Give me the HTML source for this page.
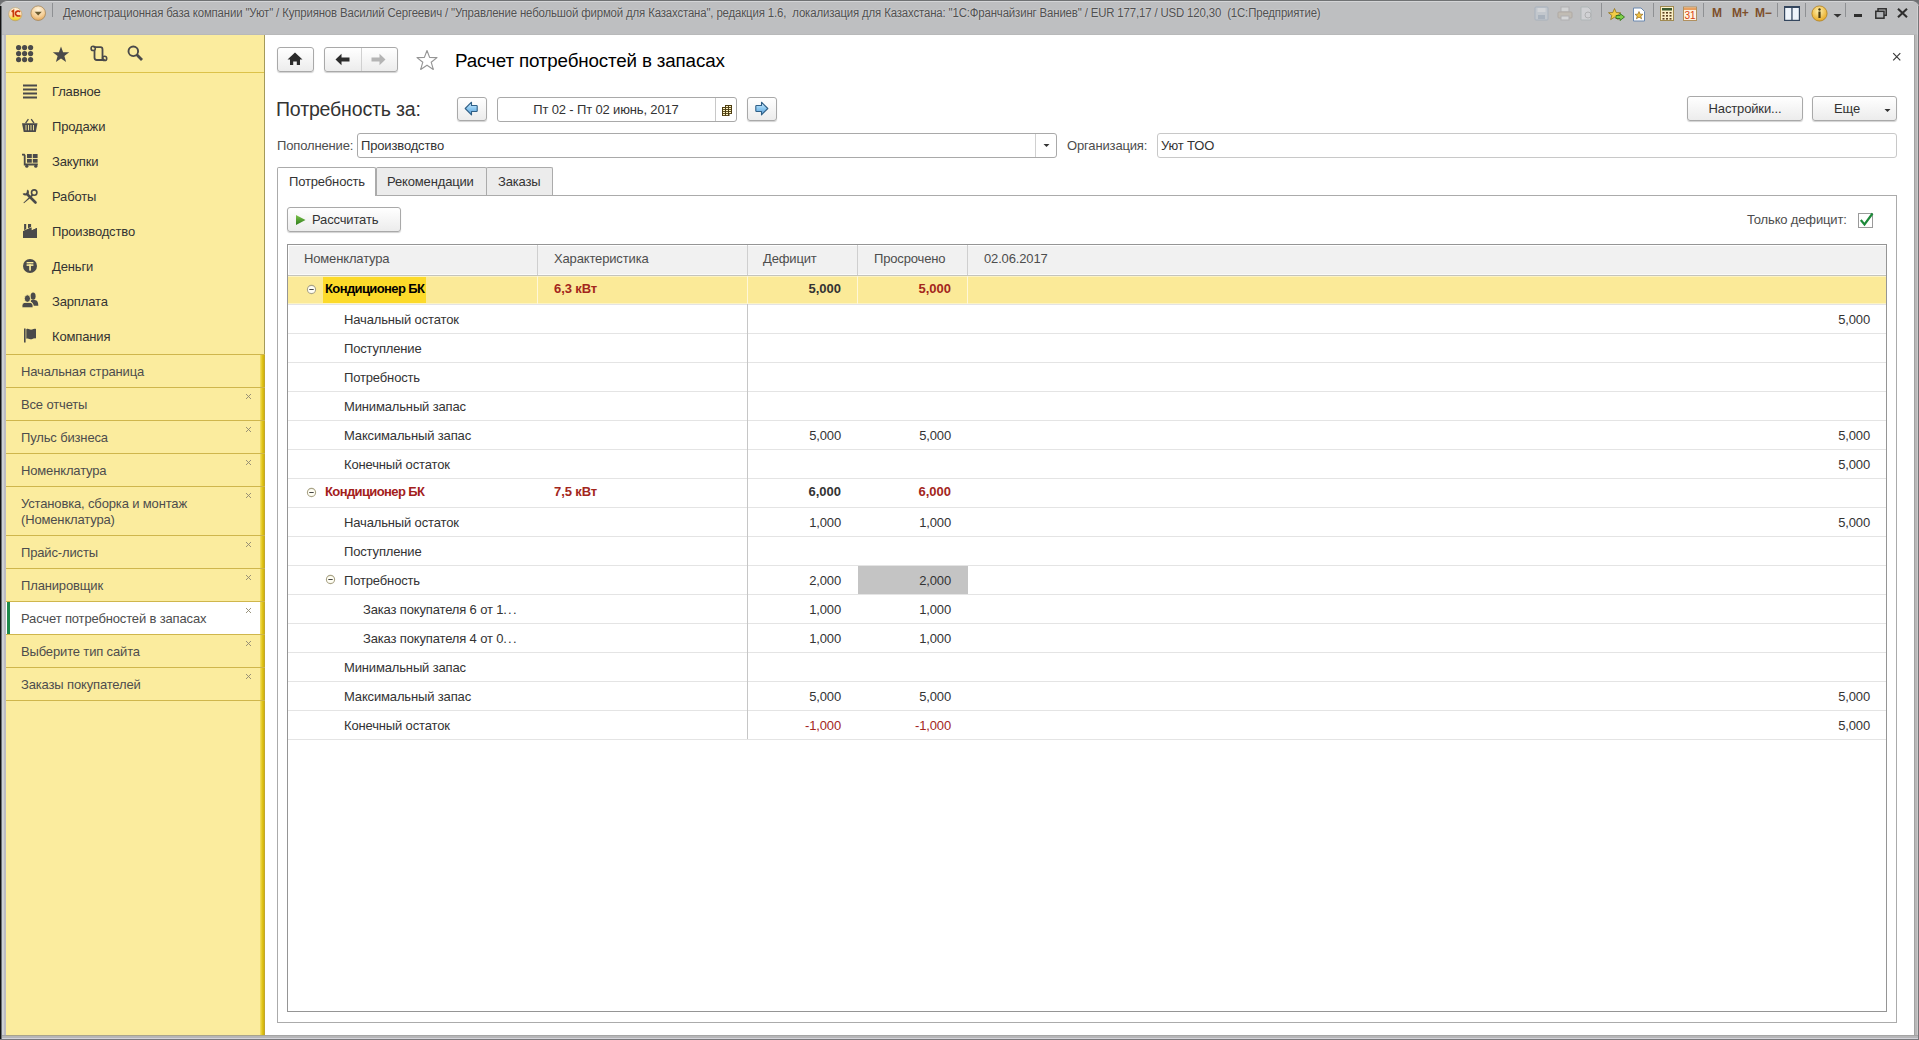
<!DOCTYPE html>
<html><head><meta charset="utf-8">
<style>
*{box-sizing:border-box;margin:0;padding:0}
html,body{width:1919px;height:1040px;overflow:hidden;background:#6e7073;font-family:"Liberation Sans",sans-serif;color:#333}
div,svg{position:absolute}
.t{white-space:nowrap;font-size:13px;line-height:16px;height:16px;letter-spacing:-0.15px}
#frame{left:0;top:0;width:1919px;height:1040px;background:#bebfc1;border-radius:7px 7px 0 0;border-top:1px solid #707274}
#title{left:2px;top:1px;width:1915px;height:34px;background:linear-gradient(#d4d5d7 0,#d4d5d7 1px,#bebfc1 1px,#bebfc1 33px,#b8b9ba 33px);border-radius:6px 6px 0 0}
#side{left:6px;top:35px;width:259px;height:1000px;background:#fbec9e}
#main{left:265px;top:35px;width:1649px;height:1000px;background:#fff}
.ico{fill:#4a4a4a}
.sep{left:0;width:259px;height:1px;background:#cfb64c}
.ow{left:15px;color:#4d4d4d}
.x{left:238px;width:9px;height:9px}
.btn{border:1px solid #a9a9a9;border-radius:3px;background:linear-gradient(#ffffff,#ececec);box-shadow:0 1px 1px rgba(0,0,0,.18)}
.row{left:0;width:1598px;height:1px;background:#e3e3e3}
.nm{color:#333}
.num{text-align:right;width:120px}
.red{color:#a3261c}
.b{font-weight:bold;letter-spacing:-0.6px}
</style></head><body>
<div id="frame"></div>
<div style="left:0;top:6px;width:1px;height:1034px;background:#111"></div>
<div style="left:1px;top:6px;width:1px;height:1034px;background:#6c7074"></div>
<div style="left:2px;top:35px;width:2px;height:1004px;background:#cdd0d4"></div>
<div style="left:4px;top:35px;width:2px;height:1004px;background:#bdbcc2"></div>
<div style="left:1914px;top:35px;width:1px;height:1004px;background:#a2a2a2"></div>
<div style="left:1915px;top:35px;width:2px;height:1004px;background:#b8b8b8"></div>
<div style="left:1917px;top:35px;width:1px;height:1004px;background:#cacaca"></div>
<div style="left:1918px;top:6px;width:1px;height:1034px;background:#757578"></div>
<div style="left:1917px;top:6px;width:1px;height:29px;background:#d0d0d2"></div>
<div style="left:2px;top:1035px;width:1916px;height:1px;background:#a4a4a4"></div>
<div style="left:6px;top:1035px;width:259px;height:1px;background:#a8a48c"></div>
<div style="left:2px;top:1036px;width:1916px;height:2px;background:#b6b6b8"></div>
<div style="left:2px;top:1038px;width:1916px;height:1px;background:#d4d4da"></div>
<div style="left:0;top:1039px;width:1919px;height:1px;background:#78787c"></div>
<div id="title">
  <div class="t" style="left:61px;top:5px;font-size:12px;line-height:14px;color:#505050;text-shadow:0 0 2px rgba(255,255,255,.5);transform:scaleX(0.95);transform-origin:0 0">Демонстрационная база компании "Уют" / Куприянов Василий Сергеевич / "Управление небольшой фирмой для Казахстана", редакция 1.6,&nbsp; локализация для Казахстана: "1С:Франчайзинг Ваниев" / EUR 177,17 / USD 120,30&nbsp; (1С:Предприятие)</div>
  <!-- left logo buttons -->
  <svg style="left:5px;top:5px" width="16" height="16" viewBox="0 0 16 16"><defs><linearGradient id="lg1" x1="0" y1="0" x2="0" y2="1"><stop offset="0" stop-color="#fff6e0"/><stop offset="0.55" stop-color="#ffd9a8"/><stop offset="0.8" stop-color="#f8e040"/><stop offset="1" stop-color="#e0c030"/></linearGradient></defs><circle cx="8.3" cy="8.2" r="6.6" fill="url(#lg1)" stroke="#b89a60" stroke-width="0.6"/><path d="M4.6 5.8 L6.4 4.6 V11.2" fill="none" stroke="#c8400a" stroke-width="1.7"/><path d="M13 6 C12 4.6 9 4.6 8.5 7.2 C8.2 9.2 10 10.4 13.4 9.9" fill="none" stroke="#c8300a" stroke-width="1.6"/></svg>
  <svg style="left:27px;top:3px" width="18" height="18" viewBox="0 0 18 18"><defs><radialGradient id="lg2" cx="0.5" cy="0.25" r="0.8"><stop offset="0" stop-color="#fff4dc"/><stop offset="0.6" stop-color="#f5cf98"/><stop offset="1" stop-color="#e0a050"/></radialGradient></defs><circle cx="9.2" cy="9.2" r="7.3" fill="url(#lg2)" stroke="#a08050" stroke-width="0.7"/><path d="M5.6 7.8 H12.8 L9.2 11.6 Z" fill="#6a5a30"/></svg>
  <div style="left:50px;top:2px;width:1px;height:14px;background:#8e9093"></div>
  <!-- right toolbar -->
  <svg style="left:1532px;top:5px" width="15" height="15" viewBox="0 0 15 15" opacity="0.4"><rect x="1" y="1" width="13" height="13" rx="1" fill="#c8d4e0" stroke="#8aa0b8"/><rect x="3.5" y="2" width="8" height="4" fill="#f0f4f8"/><rect x="4" y="9" width="7" height="4" fill="#8aa0b8"/></svg>
  <svg style="left:1555px;top:5px" width="16" height="15" viewBox="0 0 16 15" opacity="0.38"><rect x="4" y="1" width="8" height="5" fill="#f4f4f4" stroke="#999"/><rect x="1" y="6" width="14" height="6" rx="1" fill="#c8b8a0" stroke="#998877"/><rect x="4" y="10" width="8" height="4" fill="#fff" stroke="#999"/></svg>
  <svg style="left:1577px;top:5px" width="15" height="15" viewBox="0 0 15 15" opacity="0.38"><path d="M2 1 H9 L12 4 V14 H2 Z" fill="#eef0f4" stroke="#9aa"/><circle cx="9" cy="9" r="3" fill="none" stroke="#999"/></svg>
  <div style="left:1599px;top:2px;width:1px;height:14px;background:#8e9093"></div>
  <svg style="left:1606px;top:7px" width="18" height="14" viewBox="0 0 18 14"><path d="M6.5 0.5 L8.2 4.5 L12.5 4.7 L9.2 7.4 L10.3 11.6 L6.5 9.2 L2.7 11.6 L3.8 7.4 L0.5 4.7 L4.8 4.5 Z" fill="#f2cc48" stroke="#8a6a10" stroke-width="0.7"/><path d="M8 7.5 H12 V5.5 L16.5 9 L12 12.5 V10.5 H8 Z" fill="#7ed04a" stroke="#2a6a10" stroke-width="0.8"/></svg>
  <svg style="left:1630px;top:6px" width="14" height="15" viewBox="0 0 14 15"><path d="M1.5 1 H9 L12.5 4.5 V14 H1.5 Z" fill="#fff" stroke="#6a88b0" stroke-width="1"/><path d="M7 4.5 L8.2 7.2 L11 7.3 L8.8 9 L9.6 11.8 L7 10.2 L4.4 11.8 L5.2 9 L3 7.3 L5.8 7.2 Z" fill="#f0c040" stroke="#8a6010" stroke-width="0.6"/></svg>
  <div style="left:1651px;top:2px;width:1px;height:14px;background:#8e9093"></div>
  <svg style="left:1658px;top:5px" width="14" height="15" viewBox="0 0 14 15"><rect x="0.5" y="0.5" width="13" height="14" fill="#fbf0c8" stroke="#a08a50"/><rect x="2" y="2" width="10" height="2.5" fill="#3a5a30"/><g fill="#5a4020"><rect x="2.5" y="6" width="2" height="1.6"/><rect x="6" y="6" width="2" height="1.6"/><rect x="9.5" y="6" width="2" height="1.6"/><rect x="2.5" y="9" width="2" height="1.6"/><rect x="6" y="9" width="2" height="1.6"/><rect x="9.5" y="9" width="2" height="1.6"/><rect x="2.5" y="12" width="2" height="1.6"/><rect x="6" y="12" width="2" height="1.6"/><rect x="9.5" y="12" width="2" height="1.6"/></g></svg>
  <svg style="left:1681px;top:4px" width="15" height="16" viewBox="0 0 15 16"><rect x="0.5" y="2" width="13" height="13.5" fill="#fff4e0" stroke="#b09060"/><rect x="1" y="2.5" width="12" height="2.5" fill="#e8a060"/><text x="7" y="14" font-family="Liberation Sans" font-size="10" fill="#d8400f" text-anchor="middle">31</text></svg>
  <div style="left:1701px;top:2px;width:1px;height:14px;background:#8e9093"></div>
  <div class="t b" style="left:1710px;top:6px;font-size:12px;line-height:12px;color:#7d4f2c;letter-spacing:0">M</div>
  <div class="t b" style="left:1730px;top:6px;font-size:12px;line-height:12px;color:#7d4f2c;letter-spacing:-0.3px">M+</div>
  <div class="t b" style="left:1753px;top:6px;font-size:12px;line-height:12px;color:#7d4f2c;letter-spacing:-0.3px">M&#8722;</div>
  <div style="left:1775px;top:2px;width:1px;height:14px;background:#8e9093"></div>
  <svg style="left:1782px;top:5px" width="16" height="15" viewBox="0 0 16 15"><rect x="0.6" y="0.6" width="14.8" height="13.8" fill="#eef4fb" stroke="#34465e" stroke-width="1.2"/><rect x="0" y="0" width="16" height="2" fill="#34465e"/><rect x="7.3" y="1" width="1.3" height="13" fill="#34465e"/></svg>
  <div style="left:1803px;top:2px;width:1px;height:14px;background:#8e9093"></div>
  <svg style="left:1809px;top:4px" width="17" height="17" viewBox="0 0 17 17"><defs><radialGradient id="ig" cx="0.45" cy="0.35" r="0.65"><stop offset="0" stop-color="#fff2b0"/><stop offset="1" stop-color="#e8a820"/></radialGradient></defs><circle cx="8.5" cy="8.5" r="7.6" fill="url(#ig)" stroke="#b08020" stroke-width="0.8"/><circle cx="8.5" cy="4.5" r="1.2" fill="#4a3a10"/><rect x="7.4" y="6.5" width="2.2" height="6.5" fill="#4a3a10"/></svg>
  <svg style="left:1831px;top:12px" width="9" height="5" viewBox="0 0 9 5"><path d="M0.5 1 H8.5 L4.5 4.5 Z" fill="#333"/></svg>
  <div style="left:1843px;top:2px;width:1px;height:14px;background:#8e9093"></div>
  <div style="left:1852px;top:13px;width:8px;height:3px;background:#2e2e2e"></div>
  <svg style="left:1873px;top:7px" width="12" height="11" viewBox="0 0 12 11"><rect x="3" y="0.8" width="8.2" height="6.5" fill="none" stroke="#2e2e2e" stroke-width="1.5"/><rect x="0.8" y="3.3" width="8.2" height="6.9" fill="#b2b4b7" stroke="#2e2e2e" stroke-width="1.5"/></svg>
  <svg style="left:1895px;top:7px" width="11" height="10" viewBox="0 0 11 10"><path d="M1 0.8 L10 9.2 M10 0.8 L1 9.2" stroke="#2e2e2e" stroke-width="2.1"/></svg>
</div>

<!-- SIDEBAR -->
<div id="side">
  <div class="sep" style="top:37px;background:#dcc24a"></div>
  <!-- top icons -->
  <svg style="left:10px;top:10px" width="18" height="18" viewBox="0 0 18 18" class="ico">
    <circle cx="2.6" cy="2.6" r="2.6"/><circle cx="8.6" cy="2.6" r="2.6"/><circle cx="14.6" cy="2.6" r="2.6"/>
    <circle cx="2.6" cy="8.6" r="2.6"/><circle cx="8.6" cy="8.6" r="2.6"/><circle cx="14.6" cy="8.6" r="2.6"/>
    <circle cx="2.6" cy="14.6" r="2.6"/><circle cx="8.6" cy="14.6" r="2.6"/><circle cx="14.6" cy="14.6" r="2.6"/>
  </svg>
  <svg style="left:46px;top:11px" width="18" height="17" viewBox="0 0 18 17" class="ico">
    <path d="M9 0.5 L11.1 6.2 L17.2 6.3 L12.4 10.1 L14.1 16 L9 12.5 L3.9 16 L5.6 10.1 L0.8 6.3 L6.9 6.2 Z"/>
  </svg>
  <svg style="left:84px;top:10px" width="18" height="17" viewBox="0 0 18 17">
    <path d="M3.5 2.2 H10.5 C12 2.2 12.5 3 12.5 4.5 V12.5 C12.5 14.2 13.4 15 14.8 15 H6.8 C5.4 15 4.5 14.2 4.5 12.5 V5.5" fill="none" stroke="#4a4a4a" stroke-width="1.8"/>
    <circle cx="3.2" cy="3.4" r="2.1" fill="none" stroke="#4a4a4a" stroke-width="1.6"/>
    <circle cx="14.6" cy="13.4" r="2.1" fill="none" stroke="#4a4a4a" stroke-width="1.6"/>
  </svg>
  <svg style="left:121px;top:10px" width="17" height="17" viewBox="0 0 17 17">
    <circle cx="6.3" cy="6.3" r="4.8" fill="none" stroke="#4a4a4a" stroke-width="1.9"/>
    <path d="M9.6 9.6 L15 15" stroke="#4a4a4a" stroke-width="2.8"/>
  </svg>

  <!-- menu -->
  <svg style="left:17px;top:49px" width="15" height="15" viewBox="0 0 15 15" class="ico">
    <rect x="0" y="0.5" width="14" height="2"/><rect x="0" y="4.5" width="14" height="2"/><rect x="0" y="8.5" width="14" height="2"/><rect x="0" y="12.5" width="14" height="2"/>
  </svg>
  <div class="t" style="left:46px;top:49px">Главное</div>

  <svg style="left:16px;top:83px" width="16" height="15" viewBox="0 0 16 15" class="ico">
    <path d="M3.6 5.2 L6.4 1.2 M12 5.2 L9.2 1.2" stroke="#4a4a4a" stroke-width="1.3"/>
    <path d="M0 5.2 H15.5 L13.8 14 H1.7 Z"/>
    <path d="M4 7 V12.3 M6.5 7 V12.3 M9 7 V12.3 M11.5 7 V12.3" stroke="#fbec9e" stroke-width="0.9"/>
  </svg>
  <div class="t" style="left:46px;top:84px">Продажи</div>

  <svg style="left:16px;top:118px" width="17" height="15" viewBox="0 0 17 15" class="ico">
    <path d="M0 0.8 H2.6 L3.6 2.3 V10.6 H15.8 V12.4 H1.8 V3 L1.4 2.4 H0 Z"/>
    <rect x="5" y="1" width="4.8" height="4"/><rect x="10.8" y="1" width="4.8" height="4"/>
    <rect x="5" y="5.9" width="4.8" height="3.8"/><rect x="10.8" y="5.9" width="4.8" height="3.8"/>
    <circle cx="4.8" cy="13.2" r="1.6"/><circle cx="13.8" cy="13.2" r="1.6"/>
  </svg>
  <div class="t" style="left:46px;top:119px">Закупки</div>

  <svg style="left:15px;top:153px" width="18" height="17" viewBox="0 0 18 17">
    <path d="M6 6 L14.5 14.5" stroke="#4a4a4a" stroke-width="2.6" stroke-linecap="round"/>
    <path d="M6.8 1.6 A3.4 3.4 0 1 1 1.6 5.8 L3.4 4.9 A1.4 1.4 0 1 0 5.6 3.1 Z" fill="#4a4a4a"/>
    <circle cx="13.2" cy="4.6" r="2.7" fill="none" stroke="#4a4a4a" stroke-width="1.6"/>
    <path d="M11 6.2 L12.4 7.6 L3 15.3 L2.4 14.7 Z" fill="#4a4a4a"/>
  </svg>
  <div class="t" style="left:46px;top:154px">Работы</div>

  <svg style="left:16px;top:188px" width="16" height="16" viewBox="0 0 16 16" class="ico">
    <rect x="2.1" y="1" width="2.1" height="6"/><rect x="6" y="1" width="3.1" height="5"/>
    <path d="M1 8.2 L9.4 4.4 V7.6 L15 4.9 V15 H1 Z" stroke="#fbec9e" stroke-width="1.2" paint-order="stroke"/>
    <path d="M1 8.2 L9.4 4.4 V7.6 L15 4.9 V15 H1 Z"/>
  </svg>
  <div class="t" style="left:46px;top:189px">Производство</div>

  <svg style="left:17px;top:224px" width="15" height="15" viewBox="0 0 15 15">
    <circle cx="7" cy="7" r="7" fill="#4a4a4a"/>
    <rect x="3.6" y="3" width="6.8" height="1.4" fill="#fbec9e"/>
    <rect x="3.6" y="5.3" width="6.8" height="1.6" fill="#fbec9e"/>
    <rect x="6.2" y="5.3" width="1.7" height="6.3" fill="#fbec9e"/>
  </svg>
  <div class="t" style="left:46px;top:224px">Деньги</div>

  <svg style="left:16px;top:257px" width="17" height="16" viewBox="0 0 17 16" class="ico">
    <ellipse cx="11.1" cy="4.2" rx="2.5" ry="3.6"/>
    <path d="M9 8.3 C10 7.6 12.5 7.6 13.8 8.3 C15.5 8.8 16.3 10.5 16.3 13.8 H11.5 C11.2 11.5 10.2 10.3 8.8 9.8 Z"/>
    <ellipse cx="5.4" cy="6.6" rx="3.1" ry="3.8" stroke="#fbec9e" stroke-width="0.9"/>
    <path d="M0 15.8 V13.2 C0.2 11.5 1.5 10.4 3 10.4 H8 C9.5 10.4 10.8 11.5 11 13.2 V15.8 Z" stroke="#fbec9e" stroke-width="0.9"/>
  </svg>
  <div class="t" style="left:46px;top:259px">Зарплата</div>

  <svg style="left:18px;top:293px" width="13" height="15" viewBox="0 0 13 15" class="ico">
    <rect x="0" y="0.5" width="1.6" height="14"/>
    <path d="M2.3 1.2 C4.5 0 6 2.2 8 1.5 C9.5 1 10.5 0.6 12 1 V10.5 C10.5 10 9.3 10.8 7.8 11.2 C5.8 11.8 4.5 9.8 2.3 10.8 Z"/>
  </svg>
  <div class="t" style="left:46px;top:294px">Компания</div>

  <!-- open windows -->
  <div style="left:254px;top:319px;width:5px;height:681px;background:linear-gradient(90deg,#f5e06a,#e2c618 45%,#cfb010 80%,#b9a040)"></div>
  <div style="left:258px;top:0;width:1px;height:319px;background:#a49a5a"></div>
  <div class="sep" style="top:319px;height:1px"></div>
  <div class="t ow" style="top:329px">Начальная страница</div>
  <div class="sep" style="top:352px"></div>
  <div class="t ow" style="top:362px">Все отчеты</div>
  <div class="sep" style="top:385px"></div>
  <div class="t ow" style="top:395px">Пульс бизнеса</div>
  <div class="sep" style="top:418px"></div>
  <div class="t ow" style="top:428px">Номенклатура</div>
  <div class="sep" style="top:451px"></div>
  <div class="t ow" style="top:461px">Установка, сборка и монтаж</div>
  <div class="t ow" style="top:477px">(Номенклатура)</div>
  <div class="sep" style="top:500px"></div>
  <div class="t ow" style="top:510px">Прайс-листы</div>
  <div class="sep" style="top:533px"></div>
  <div class="t ow" style="top:543px">Планировщик</div>
  <div class="sep" style="top:566px"></div>
  <div style="left:0;top:567px;width:254px;height:32px;background:#fff"></div>
  <div style="left:1px;top:567px;width:3px;height:32px;background:#1f8a4c"></div>
  <div class="t ow" style="top:576px">Расчет потребностей в запасах</div>
  <div class="sep" style="top:599px"></div>
  <div class="t ow" style="top:609px">Выберите тип сайта</div>
  <div class="sep" style="top:632px"></div>
  <div class="t ow" style="top:642px">Заказы покупателей</div>
  <div class="sep" style="top:665px"></div>
  <svg class="x" style="top:357px" viewBox="0 0 9 9"><path d="M2 2 L7 7 M7 2 L2 7" stroke="#8f8870" stroke-width="0.9"/></svg>
  <svg class="x" style="top:390px" viewBox="0 0 9 9"><path d="M2 2 L7 7 M7 2 L2 7" stroke="#8f8870" stroke-width="0.9"/></svg>
  <svg class="x" style="top:423px" viewBox="0 0 9 9"><path d="M2 2 L7 7 M7 2 L2 7" stroke="#8f8870" stroke-width="0.9"/></svg>
  <svg class="x" style="top:456px" viewBox="0 0 9 9"><path d="M2 2 L7 7 M7 2 L2 7" stroke="#8f8870" stroke-width="0.9"/></svg>
  <svg class="x" style="top:505px" viewBox="0 0 9 9"><path d="M2 2 L7 7 M7 2 L2 7" stroke="#8f8870" stroke-width="0.9"/></svg>
  <svg class="x" style="top:538px" viewBox="0 0 9 9"><path d="M2 2 L7 7 M7 2 L2 7" stroke="#8f8870" stroke-width="0.9"/></svg>
  <svg class="x" style="top:571px" viewBox="0 0 9 9"><path d="M2 2 L7 7 M7 2 L2 7" stroke="#8f8870" stroke-width="0.9"/></svg>
  <svg class="x" style="top:604px" viewBox="0 0 9 9"><path d="M2 2 L7 7 M7 2 L2 7" stroke="#8f8870" stroke-width="0.9"/></svg>
  <svg class="x" style="top:637px" viewBox="0 0 9 9"><path d="M2 2 L7 7 M7 2 L2 7" stroke="#8f8870" stroke-width="0.9"/></svg>
</div>

<!-- MAIN -->
<div id="main"></div>
<!-- toolbar -->
<div class="btn" style="left:277px;top:47px;width:37px;height:25px"></div>
<svg style="left:287px;top:52px" width="16" height="14" viewBox="0 0 16 14"><path d="M8 0.5 L15.5 7.5 H13 V13 H9.8 V9.5 H6.2 V13 H3 V7.5 H0.5 Z" fill="#2b2b2b"/></svg>
<div class="btn" style="left:324px;top:47px;width:74px;height:25px"></div>
<div style="left:361px;top:48px;width:1px;height:23px;background:#d0d0d0"></div>
<svg style="left:335px;top:53px" width="16" height="13" viewBox="0 0 16 13"><path d="M0.5 6.5 L6.5 0.8 V4.6 H14.5 V8.4 H6.5 V12.2 Z" fill="#2b2b2b"/></svg>
<svg style="left:370px;top:53px" width="16" height="13" viewBox="0 0 16 13"><path d="M15.5 6.5 L9.5 0.8 V4.6 H1.5 V8.4 H9.5 V12.2 Z" fill="#b4b4b4"/></svg>
<svg style="left:415px;top:49px" width="24" height="22" viewBox="0 0 24 22"><path d="M12 1.5 L14.6 8.4 L22 8.6 L16.2 13.2 L18.3 20.4 L12 16.2 L5.7 20.4 L7.8 13.2 L2 8.6 L9.4 8.4 Z" fill="none" stroke="#959595" stroke-width="1.15" stroke-linejoin="round"/></svg>
<div class="t" style="left:455px;top:50px;font-size:18.8px;line-height:22px;height:22px;color:#000">Расчет потребностей в запасах</div>
<svg style="left:1892px;top:52px" width="10" height="10" viewBox="0 0 10 10"><path d="M1.2 1.2 L8.3 8.3 M8.3 1.2 L1.2 8.3" stroke="#3a3a3a" stroke-width="1.2"/></svg>

<!-- period -->
<div class="t" style="left:276px;top:98px;font-size:19.5px;line-height:22px;height:22px;color:#333">Потребность за:</div>
<div class="btn" style="left:457px;top:97px;width:30px;height:24px"></div>
<svg style="left:464px;top:101px" width="14" height="15" viewBox="0 0 14 15"><defs><linearGradient id="bl" x1="0" y1="0" x2="0" y2="1"><stop offset="0" stop-color="#d8f0ff"/><stop offset="0.5" stop-color="#8cc8f0"/><stop offset="1" stop-color="#5a9ed8"/></linearGradient></defs><path d="M12.5 4.5 H7.5 V1.2 L1.2 7.5 L7.5 13.8 V10.5 H12.5 Q13.2 10.5 13.2 9.8 V5.2 Q13.2 4.5 12.5 4.5 Z" fill="url(#bl)" stroke="#2f5f86" stroke-width="1.1" stroke-linejoin="round"/></svg>
<div style="left:497px;top:97px;width:240px;height:25px;border:1px solid #a9a9a9;border-radius:3px;background:#fff"></div>
<div style="left:715px;top:98px;width:1px;height:23px;background:#c8c8c8"></div>
<div class="t" style="left:497px;top:102px;width:218px;text-align:center;color:#333">Пт 02 - Пт 02 июнь, 2017</div>
<svg style="left:722px;top:105px" width="11" height="12" viewBox="0 0 11 12"><path d="M3 0 H10 V9 H7.5 V11 H0 V2 H3 Z" fill="#4d3d12"/><g fill="#fff6c4"><rect x="4" y="1" width="2" height="1.1"/><rect x="7" y="1" width="2" height="1.1"/><rect x="1" y="3" width="2" height="1.1"/><rect x="4" y="3" width="2" height="1.1"/><rect x="7" y="3" width="2" height="1.1"/><rect x="1" y="5" width="2" height="1.1"/><rect x="4" y="5" width="2" height="1.1"/><rect x="7" y="5" width="2" height="1.1"/><rect x="1" y="7" width="2" height="1.1"/><rect x="4" y="7" width="2" height="1.1"/><rect x="7" y="7" width="2" height="1.1"/><rect x="1" y="9" width="2" height="1.1"/><rect x="4" y="9" width="2" height="1.1"/></g></svg>
<div class="btn" style="left:747px;top:97px;width:30px;height:24px"></div>
<svg style="left:755px;top:101px" width="14" height="15" viewBox="0 0 14 15"><path d="M1.5 4.5 H6.5 V1.2 L12.8 7.5 L6.5 13.8 V10.5 H1.5 Q0.8 10.5 0.8 9.8 V5.2 Q0.8 4.5 1.5 4.5 Z" fill="url(#bl)" stroke="#2f5f86" stroke-width="1.1" stroke-linejoin="round"/></svg>

<div class="btn" style="left:1687px;top:96px;width:116px;height:25px"></div>
<div class="t" style="left:1687px;top:101px;width:116px;text-align:center">Настройки...</div>
<div class="btn" style="left:1812px;top:96px;width:85px;height:25px"></div>
<div class="t" style="left:1812px;top:101px;width:70px;text-align:center">Еще</div>
<svg style="left:1884px;top:108px" width="7" height="5" viewBox="0 0 7 5"><path d="M0.5 1 H6.5 L3.5 4 Z" fill="#333"/></svg>

<!-- fields -->
<div class="t" style="left:277px;top:138px;color:#4d4d4d">Пополнение:</div>
<div style="left:357px;top:133px;width:700px;height:25px;border:1px solid #a9a9a9;border-radius:3px;background:#fff"></div>
<div style="left:1035px;top:134px;width:1px;height:23px;background:#d0d0d0"></div>
<svg style="left:1043px;top:143px" width="7" height="5" viewBox="0 0 7 5"><path d="M0.5 1 H6.5 L3.5 4 Z" fill="#333"/></svg>
<div class="t" style="left:361px;top:138px">Производство</div>
<div class="t" style="left:1067px;top:138px;color:#4d4d4d">Организация:</div>
<div style="left:1157px;top:133px;width:740px;height:25px;border:1px solid #c8c8c8;border-radius:3px;background:#fff"></div>
<div class="t" style="left:1161px;top:138px">Уют ТОО</div>

<!-- tabs -->
<div style="left:277px;top:195px;width:1620px;height:828px;border:1px solid #ababab;background:#fff"></div>
<div style="left:376px;top:167px;width:111px;height:28px;border:1px solid #ababab;border-bottom:none;border-radius:2px 2px 0 0;background:#ececec"></div>
<div style="left:486px;top:167px;width:67px;height:28px;border:1px solid #ababab;border-bottom:none;border-radius:2px 2px 0 0;background:#ececec"></div>
<div style="left:277px;top:167px;width:99px;height:29px;border:1px solid #ababab;border-bottom:none;border-radius:2px 2px 0 0;background:#fff"></div>
<div style="left:278px;top:195px;width:97px;height:1px;background:#fff"></div>
<div class="t" style="left:289px;top:174px">Потребность</div>
<div class="t" style="left:387px;top:174px">Рекомендации</div>
<div class="t" style="left:498px;top:174px">Заказы</div>

<!-- command bar -->
<div class="btn" style="left:287px;top:207px;width:114px;height:25px"></div>
<svg style="left:295px;top:214px" width="11" height="12" viewBox="0 0 11 12"><defs><linearGradient id="gr" x1="0" y1="0" x2="0" y2="1"><stop offset="0" stop-color="#7cc34a"/><stop offset="1" stop-color="#2e7d1c"/></linearGradient></defs><path d="M1 1 L10.5 6 L1 11 Z" fill="url(#gr)"/></svg>
<div class="t" style="left:312px;top:212px">Рассчитать</div>
<div class="t" style="left:1747px;top:212px;color:#4d4d4d">Только дефицит:</div>
<svg style="left:1857px;top:211px" width="18" height="18" viewBox="0 0 18 18"><rect x="1.5" y="2.5" width="14" height="14" fill="#fff" stroke="#9a9a9a" stroke-width="1"/><path d="M3.8 9 L7.5 13.5 L15.5 2.5" fill="none" stroke="#1d8a3a" stroke-width="2.2"/></svg>

<!-- table -->
<div style="left:287px;top:244px;width:1600px;height:768px;border:1px solid #959595;background:#fff"></div>
<div style="left:288px;top:245px;width:1598px;height:30px;background:#f1f1f1;border-top:1px solid #fff;border-left:1px solid #fff;border-bottom:1px solid #fafafa"></div>
<div style="left:288px;top:275px;width:1598px;height:1px;background:#c4c4bc"></div>
<div style="left:537px;top:245px;width:1px;height:30px;background:#cfcfcf"></div>
<div style="left:747px;top:245px;width:1px;height:30px;background:#cfcfcf"></div>
<div style="left:857px;top:245px;width:1px;height:30px;background:#cfcfcf"></div>
<div style="left:967px;top:245px;width:1px;height:30px;background:#cfcfcf"></div>
<div class="t" style="left:304px;top:251px;color:#4d4d4d">Номенклатура</div>
<div class="t" style="left:554px;top:251px;color:#4d4d4d">Характеристика</div>
<div class="t" style="left:763px;top:251px;color:#4d4d4d">Дефицит</div>
<div class="t" style="left:874px;top:251px;color:#4d4d4d">Просрочено</div>
<div class="t" style="left:984px;top:251px;color:#4d4d4d">02.06.2017</div>
<div style="left:288px;top:276px;width:1598px;height:28px;background:#fbea98"></div>
<div style="left:288px;top:276px;width:1598px;height:1px;background:#fdf4c4"></div>
<div style="left:288px;top:303px;width:1598px;height:1px;background:#fdf4c4"></div>
<div style="left:537px;top:276px;width:1px;height:28px;background:#fff7d8"></div>
<div style="left:747px;top:276px;width:1px;height:28px;background:#fff7d8"></div>
<div style="left:857px;top:276px;width:1px;height:28px;background:#fff7d8"></div>
<div style="left:967px;top:276px;width:1px;height:28px;background:#fff7d8"></div>
<div style="left:323px;top:277px;width:103px;height:26px;background:#fcda2a"></div>
<div style="left:288px;top:304px;width:1598px;height:1px;background:#e4e4e4"></div>
<div style="left:288px;top:333px;width:1598px;height:1px;background:#e4e4e4"></div>
<div style="left:288px;top:362px;width:1598px;height:1px;background:#e4e4e4"></div>
<div style="left:288px;top:391px;width:1598px;height:1px;background:#e4e4e4"></div>
<div style="left:288px;top:420px;width:1598px;height:1px;background:#e4e4e4"></div>
<div style="left:288px;top:449px;width:1598px;height:1px;background:#e4e4e4"></div>
<div style="left:288px;top:478px;width:1598px;height:1px;background:#e4e4e4"></div>
<div style="left:288px;top:507px;width:1598px;height:1px;background:#e4e4e4"></div>
<div style="left:288px;top:536px;width:1598px;height:1px;background:#e4e4e4"></div>
<div style="left:288px;top:565px;width:1598px;height:1px;background:#e4e4e4"></div>
<div style="left:288px;top:594px;width:1598px;height:1px;background:#e4e4e4"></div>
<div style="left:288px;top:623px;width:1598px;height:1px;background:#e4e4e4"></div>
<div style="left:288px;top:652px;width:1598px;height:1px;background:#e4e4e4"></div>
<div style="left:288px;top:681px;width:1598px;height:1px;background:#e4e4e4"></div>
<div style="left:288px;top:710px;width:1598px;height:1px;background:#e4e4e4"></div>
<div style="left:288px;top:739px;width:1598px;height:1px;background:#e4e4e4"></div>
<div style="left:747px;top:304px;width:1px;height:435px;background:#c6c6c6"></div>
<div style="left:858px;top:566px;width:110px;height:28px;background:#c4c4c4"></div>
<svg style="left:306px;top:284px" width="11" height="11" viewBox="0 0 11 11"><circle cx="5.5" cy="5.5" r="4.1" fill="#fffef4" stroke="#aaa488" stroke-width="1.1"/><path d="M3.3 5.5 H7.7" stroke="#444" stroke-width="1"/></svg>
<div class="t b" style="left:325px;top:281px;color:#000">Кондиционер БК</div>
<div class="t b" style="letter-spacing:-0.1px;left:554px;top:281px;color:#a3261c">6,3 кВт</div>
<div class="t b num" style="letter-spacing:0;left:721px;top:281px;color:#333">5,000</div>
<div class="t b num" style="letter-spacing:0;left:831px;top:281px;color:#a3261c">5,000</div>
<div class="t" style="left:344px;top:312px;color:#333">Начальный остаток</div>
<div class="t num" style="left:1750px;top:312px;color:#333">5,000</div>
<div class="t" style="left:344px;top:341px;color:#333">Поступление</div>
<div class="t" style="left:344px;top:370px;color:#333">Потребность</div>
<div class="t" style="left:344px;top:399px;color:#333">Минимальный запас</div>
<div class="t" style="left:344px;top:428px;color:#333">Максимальный запас</div>
<div class="t num" style="left:721px;top:428px;color:#333">5,000</div>
<div class="t num" style="left:831px;top:428px;color:#333">5,000</div>
<div class="t num" style="left:1750px;top:428px;color:#333">5,000</div>
<div class="t" style="left:344px;top:457px;color:#333">Конечный остаток</div>
<div class="t num" style="left:1750px;top:457px;color:#333">5,000</div>
<svg style="left:306px;top:487px" width="11" height="11" viewBox="0 0 11 11"><circle cx="5.5" cy="5.5" r="4.1" fill="#fffef4" stroke="#aaa488" stroke-width="1.1"/><path d="M3.3 5.5 H7.7" stroke="#444" stroke-width="1"/></svg>
<div class="t b" style="left:325px;top:484px;color:#a3201b">Кондиционер БК</div>
<div class="t b" style="letter-spacing:-0.1px;left:554px;top:484px;color:#a3261c">7,5 кВт</div>
<div class="t b num" style="letter-spacing:0;left:721px;top:484px;color:#333">6,000</div>
<div class="t b num" style="letter-spacing:0;left:831px;top:484px;color:#a3261c">6,000</div>
<div class="t" style="left:344px;top:515px;color:#333">Начальный остаток</div>
<div class="t num" style="left:721px;top:515px;color:#333">1,000</div>
<div class="t num" style="left:831px;top:515px;color:#333">1,000</div>
<div class="t num" style="left:1750px;top:515px;color:#333">5,000</div>
<div class="t" style="left:344px;top:544px;color:#333">Поступление</div>
<svg style="left:325px;top:574px" width="11" height="11" viewBox="0 0 11 11"><circle cx="5.5" cy="5.5" r="4.1" fill="#fffef4" stroke="#aaa488" stroke-width="1.1"/><path d="M3.3 5.5 H7.7" stroke="#444" stroke-width="1"/></svg>
<div class="t" style="left:344px;top:573px;color:#333">Потребность</div>
<div class="t num" style="left:721px;top:573px;color:#333">2,000</div>
<div class="t num" style="left:831px;top:573px;color:#333">2,000</div>
<div class="t" style="left:363px;top:602px;color:#333">Заказ покупателя 6 от 1<span style="letter-spacing:1.2px">...</span></div>
<div class="t num" style="left:721px;top:602px;color:#333">1,000</div>
<div class="t num" style="left:831px;top:602px;color:#333">1,000</div>
<div class="t" style="left:363px;top:631px;color:#333">Заказ покупателя 4 от 0<span style="letter-spacing:1.2px">...</span></div>
<div class="t num" style="left:721px;top:631px;color:#333">1,000</div>
<div class="t num" style="left:831px;top:631px;color:#333">1,000</div>
<div class="t" style="left:344px;top:660px;color:#333">Минимальный запас</div>
<div class="t" style="left:344px;top:689px;color:#333">Максимальный запас</div>
<div class="t num" style="left:721px;top:689px;color:#333">5,000</div>
<div class="t num" style="left:831px;top:689px;color:#333">5,000</div>
<div class="t num" style="left:1750px;top:689px;color:#333">5,000</div>
<div class="t" style="left:344px;top:718px;color:#333">Конечный остаток</div>
<div class="t num" style="left:721px;top:718px;color:#a3261c">-1,000</div>
<div class="t num" style="left:831px;top:718px;color:#a3261c">-1,000</div>
<div class="t num" style="left:1750px;top:718px;color:#333">5,000</div>
</body></html>
